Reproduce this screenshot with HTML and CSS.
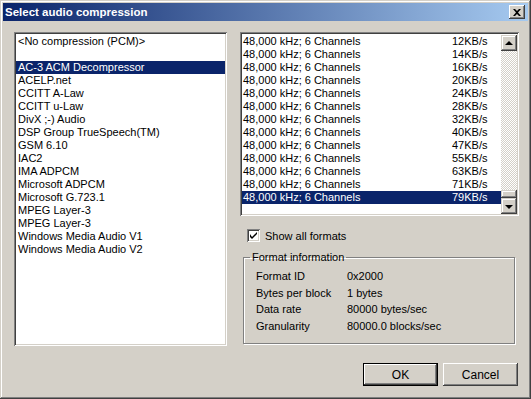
FILE: index.html
```html
<!DOCTYPE html>
<html lang="en">
<head>
    <meta charset="UTF-8">
    <title>Select audio compression</title>
    <link rel="stylesheet" href="styles.css">
</head>
<body>
    <div class="window">
        <div class="titlebar">
            <span class="title">Select audio compression</span>
            <span class="close">
                <svg width="8" height="7" viewBox="0 0 8 7"><path d="M0 0h2l2 2 2-2h2L5 3.5 8 7H6L4 5 2 7H0l3-3.5z" fill="#000"/></svg>
            </span>
        </div>

        <div class="content">
            <!-- codecs -->
            <div class="listbox codecs">
                <div class="item">&lt;No compression (PCM)&gt;</div>
                <div class="item"></div>
                <div class="item selected">AC-3 ACM Decompressor</div>
                <div class="item">ACELP.net</div>
                <div class="item">CCITT A-Law</div>
                <div class="item">CCITT u-Law</div>
                <div class="item">DivX ;-) Audio</div>
                <div class="item">DSP Group TrueSpeech(TM)</div>
                <div class="item">GSM 6.10</div>
                <div class="item">IAC2</div>
                <div class="item">IMA ADPCM</div>
                <div class="item">Microsoft ADPCM</div>
                <div class="item">Microsoft G.723.1</div>
                <div class="item">MPEG Layer-3</div>
                <div class="item">MPEG Layer-3</div>
                <div class="item">Windows Media Audio V1</div>
                <div class="item">Windows Media Audio V2</div>
            </div>

            <div class="rightcol">
                <!-- formats -->
                <div class="listbox formats">
                    <div class="rows">
                        <div class="item"><span class="fmt">48,000 kHz; 6 Channels</span><span>12KB/s</span></div>
                        <div class="item"><span class="fmt">48,000 kHz; 6 Channels</span><span>14KB/s</span></div>
                        <div class="item"><span class="fmt">48,000 kHz; 6 Channels</span><span>16KB/s</span></div>
                        <div class="item"><span class="fmt">48,000 kHz; 6 Channels</span><span>20KB/s</span></div>
                        <div class="item"><span class="fmt">48,000 kHz; 6 Channels</span><span>24KB/s</span></div>
                        <div class="item"><span class="fmt">48,000 kHz; 6 Channels</span><span>28KB/s</span></div>
                        <div class="item"><span class="fmt">48,000 kHz; 6 Channels</span><span>32KB/s</span></div>
                        <div class="item"><span class="fmt">48,000 kHz; 6 Channels</span><span>40KB/s</span></div>
                        <div class="item"><span class="fmt">48,000 kHz; 6 Channels</span><span>47KB/s</span></div>
                        <div class="item"><span class="fmt">48,000 kHz; 6 Channels</span><span>55KB/s</span></div>
                        <div class="item"><span class="fmt">48,000 kHz; 6 Channels</span><span>63KB/s</span></div>
                        <div class="item"><span class="fmt">48,000 kHz; 6 Channels</span><span>71KB/s</span></div>
                        <div class="item selected"><span class="fmt">48,000 kHz; 6 Channels</span><span>79KB/s</span></div>
                    </div>
                    <div class="scrollbar">
                        <div class="sbtn"><span class="arrow up"></span></div>
                        <div class="track"></div>
                        <div class="thumb"></div>
                        <div class="sbtn"><span class="arrow down"></span></div>
                    </div>
                </div>

                <label class="check">
                    <span class="box">
                        <svg width="7" height="7" viewBox="0 0 7 7"><path d="M0 2v3l2 2 5-5V0L2 5z" fill="#000"/></svg>
                    </span>
                    Show all formats
                </label>

                <fieldset class="group">
                    <legend>Format information</legend>
                    <div class="info">
                        <span>Format ID</span><span>0x2000</span>
                        <span>Bytes per block</span><span>1 bytes</span>
                        <span>Data rate</span><span>80000 bytes/sec</span>
                        <span>Granularity</span><span>80000.0 blocks/sec</span>
                    </div>
                </fieldset>
            </div>
        </div>

        <div class="buttons">
            <button class="btn default">OK</button>
            <button class="btn">Cancel</button>
        </div>
    </div>
</body>
</html>
```

FILE: styles.css
```css
* {
    box-sizing: border-box;
}
body {
    margin: 0;
    font-family: "Liberation Sans", Arial, sans-serif;
    font-size: 11px;
    color: #000;
}
.window {
    width: 531px;
    height: 399px;
    background-color: #d4d0c8;
    padding: 3px;
    box-shadow: inset -1px -1px #404040, inset 1px 1px #d4d0c8,
                inset -2px -2px #808080, inset 2px 2px #fff;
}
.titlebar {
    height: 18px;
    display: flex;
    align-items: center;
    justify-content: space-between;
    padding: 0 3px 0 2px;
    background: linear-gradient(to right, #0a246a, #a6caf0);
}
.title {
    color: #fff;
    font-weight: bold;
    font-size: 11.5px;
}
.close {
    width: 16px;
    height: 14px;
    display: flex;
    align-items: center;
    justify-content: center;
    background-color: #d4d0c8;
    box-shadow: inset -1px -1px #404040, inset 1px 1px #fff,
                inset -2px -2px #808080, inset 2px 2px #d4d0c8;
}

.content {
    display: flex;
    gap: 13px;
    padding: 11px 0 0 11px;
}
.listbox {
    background-color: #fff;
    padding: 2px;
    box-shadow: inset 1px 1px #808080, inset -1px -1px #fff,
                inset 2px 2px #404040, inset -2px -2px #d4d0c8;
}
.item {
    height: 13px;
    line-height: 13px;
    white-space: nowrap;
}
.selected {
    background-color: #0a246a;
    color: #fff;
}
.codecs {
    width: 213px;
    height: 314px;
    padding-top: 3px;
}
.codecs .item {
    padding-left: 2px;
}

.rightcol {
    display: flex;
    flex-direction: column;
}
.formats {
    width: 279px;
    height: 184px;
    display: flex;
}
.rows {
    flex: 1;
    padding-top: 1px;
}
.formats .item {
    display: flex;
    padding-left: 1px;
}
.fmt {
    width: 209px;
}
.scrollbar {
    width: 16px;
    display: flex;
    flex-direction: column;
    padding-top: 1px;
}
.track {
    flex: 1;
    background-color: #fff;
    background-image: repeating-conic-gradient(#d4d0c8 0 25%, #fff 0 50%);
    background-size: 2px 2px;
}
.sbtn, .thumb {
    background-color: #d4d0c8;
    box-shadow: inset -1px -1px #404040, inset 1px 1px #d4d0c8,
                inset -2px -2px #808080, inset 2px 2px #fff;
}
.sbtn {
    height: 16px;
    display: flex;
    align-items: center;
    justify-content: center;
}
.thumb {
    height: 8px;
}
.arrow {
    width: 0;
    height: 0;
    border-left: 4px solid transparent;
    border-right: 4px solid transparent;
}
.arrow.up {
    border-bottom: 4px solid #000;
    margin-bottom: 1px;
}
.arrow.down {
    border-top: 4px solid #000;
    margin-top: 1px;
}

.check {
    display: flex;
    align-items: center;
    gap: 5px;
    margin: 13px 0 0 7px;
}
.box {
    width: 13px;
    height: 13px;
    background-color: #fff;
    display: flex;
    align-items: center;
    justify-content: center;
    box-shadow: inset 1px 1px #808080, inset -1px -1px #fff,
                inset 2px 2px #404040, inset -2px -2px #d4d0c8;
}

.group {
    margin: 9px 0 0 3px;
    width: 272px;
    height: 93px;
    padding: 5px 6px 0 12px;
    border: 1px solid #808080;
    box-shadow: inset 1px 1px #fff, 1px 1px #fff;
}
.group legend {
    padding: 0 2px;
    margin-left: -6px;
}
.info {
    display: grid;
    grid-template-columns: 91px auto;
    line-height: 16.5px;
}

.buttons {
    display: flex;
    justify-content: flex-end;
    gap: 5px;
    padding-right: 10px;
    margin-top: 17px;
}
.btn {
    width: 75px;
    height: 23px;
    font-family: inherit;
    font-size: 12px;
    color: #000;
    background-color: #d4d0c8;
    border: none;
    padding: 0;
    box-shadow: inset -1px -1px #404040, inset 1px 1px #fff,
                inset -2px -2px #808080, inset 2px 2px #d4d0c8;
}
.btn.default {
    box-shadow: inset 0 0 0 1px #000, inset -2px -2px #404040, inset 2px 2px #fff,
                inset -3px -3px #808080;
}
```
